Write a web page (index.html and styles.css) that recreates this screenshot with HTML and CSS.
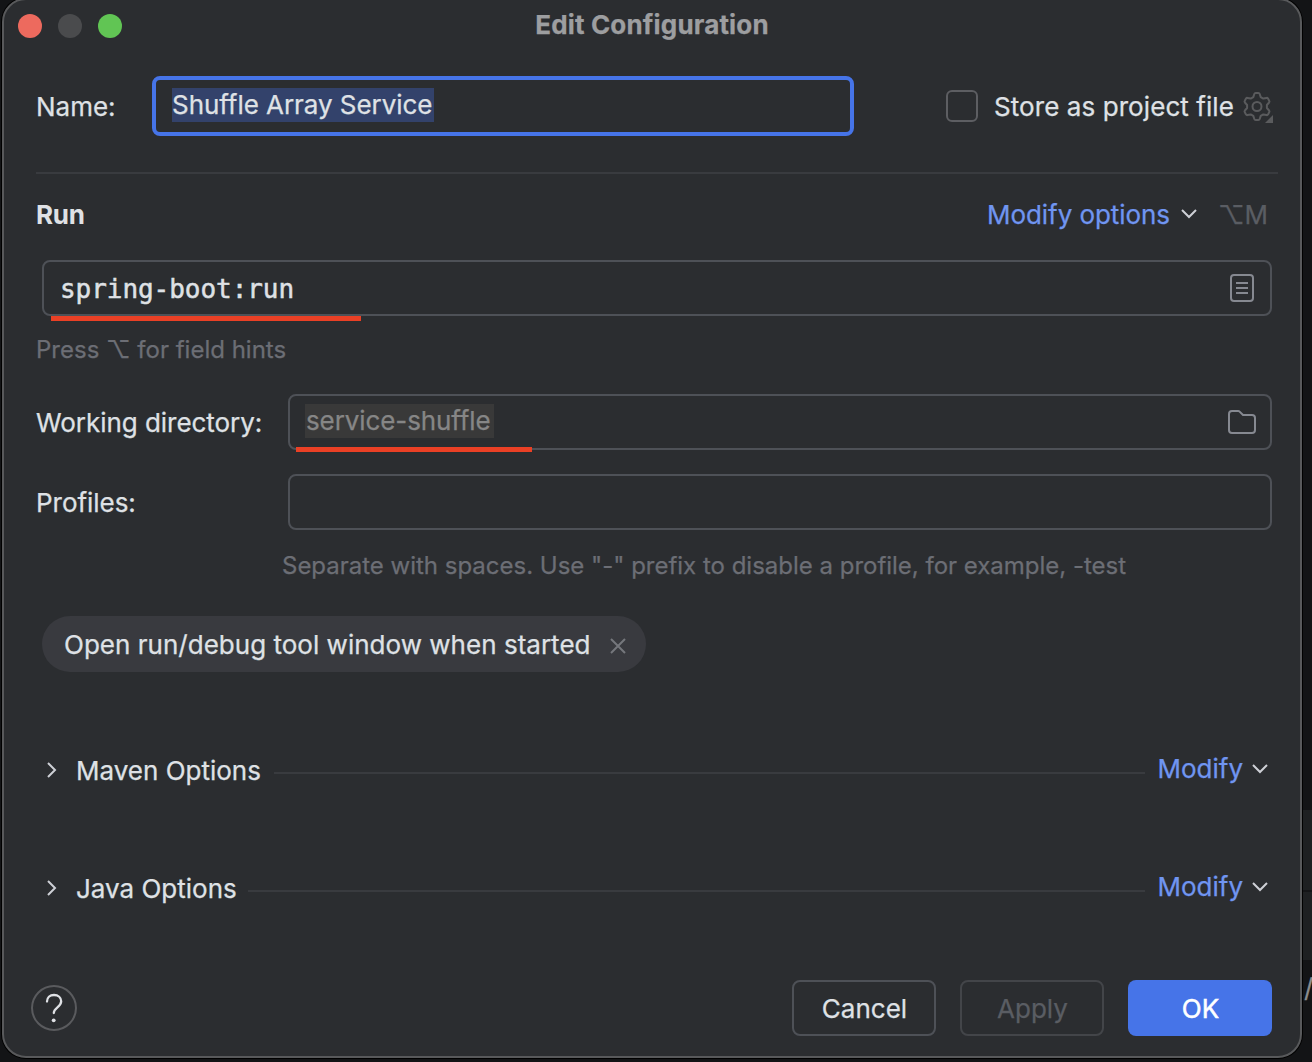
FILE: index.html
```html
<!DOCTYPE html>
<html lang="en">
<head>
<meta charset="utf-8">
<title>Edit Configuration</title>
<link rel="stylesheet" href="styles.css">
</head>
<body>
<div class="backdrop-panel"></div>
<span class="backdrop-text">/</span>
<main class="dialog">
  <header class="titlebar">
    <i class="light close"></i><i class="light minimize"></i><i class="light maximize"></i>
    <h1 class="title">Edit Configuration</h1>
  </header>

  <section class="name-row">
    <label class="name-label">Name:</label>
    <div class="input focused"><span class="selection">Shuffle Array Service</span></div>
    <div class="store">
      <i class="checkbox"></i>
      <span class="store-label">Store as project file</span>
      <svg class="gear" width="32" height="32" viewBox="0 0 32 32" fill="none" stroke="#5a5b5d" stroke-width="2" stroke-linejoin="round">
        <path d="M13.6 2h2.800c.6 0 1.100.4 1.300 1l1 3.100 2.600 1.500 3.200-.7c.6-.1 1.200.1 1.500.7l1.300 2.300c.3.500.2 1.100-.2 1.600L24.900 14v3l2.200 2.500c.4.500.5 1.100.2 1.600L26 23.400c-.3.600-.9.800-1.500.7l-3.200-.7-2.600 1.500-1 3.100c-.2.600-.7 1-1.300 1h-2.800c-.6 0-1.100-.4-1.300-1l-1-3.100-2.600-1.500-3.200.7c-.6.1-1.200-.1-1.500-.7l-1.300-2.300c-.3-.5-.2-1.100.2-1.600L5.100 17v-3l-2.200-2.500c-.4-.5-.5-1.100-.2-1.600L4 7.600c.3-.6.9-.8 1.500-.7l3.200.7 2.600-1.500 1-3.100c.2-.6.7-1 1.300-1z"/>
        <circle cx="15" cy="15.500" r="4.500"/>
        <path d="M31 24v8h-8z" fill="#5a5b5d" stroke="none"/>
      </svg>
    </div>
  </section>

  <hr class="separator">

  <section class="run-row">
    <h2 class="run-title">Run</h2>
    <a class="link">Modify options</a>
    <svg class="chevron-down" width="16" height="10" viewBox="0 0 16 10"><path d="M1 1l7 7 7-7"/></svg>
    <span class="shortcut">⌥M</span>
  </section>

  <div class="input command">
    <span class="mono">spring-boot:run</span>
    <svg width="24" height="28" viewBox="0 0 24 28" class="field-icon"><rect x="1" y="1" width="22" height="26" rx="3"/><path d="M6 9h12M6 14h12M6 19h12"/></svg>
    <i class="mark mark-command"></i>
  </div>
  <p class="hint press-hint">Press ⌥ for field hints</p>

  <div class="form-row">
    <label class="form-label">Working directory:</label>
    <div class="input grow">
      <span class="directory">service-shuffle</span>
      <svg width="28" height="24" viewBox="0 0 28 24" class="field-icon folder"><path d="M1 4a3 3 0 0 1 3-3h6.200a2 2 0 0 1 1.400.6L15 5h9a3 3 0 0 1 3 3v12a3 3 0 0 1-3 3H4a3 3 0 0 1-3-3z"/></svg>
      <i class="mark mark-directory"></i>
    </div>
  </div>
  <div class="form-row profiles">
    <label class="form-label">Profiles:</label>
    <div class="input grow"></div>
  </div>
  <p class="hint profile-hint">Separate with spaces. Use "-" prefix to disable a profile, for example, -test</p>

  <div class="chip">
    <span class="chip-text">Open run/debug tool window when started</span>
    <svg width="16" height="16" viewBox="0 0 16 16" class="chip-close"><path d="M1 1l14 14M15 1 1 15"/></svg>
  </div>

  <section class="group maven">
    <svg class="chevron-right" width="10" height="16" viewBox="0 0 10 16"><path d="M1 1l7 7-7 7"/></svg>
    <span class="group-title">Maven Options</span>
    <i class="rule"></i>
    <a class="link group-link">Modify</a>
    <svg class="chevron-down" width="16" height="10" viewBox="0 0 16 10"><path d="M1 1l7 7 7-7"/></svg>
  </section>
  <section class="group java">
    <svg class="chevron-right" width="10" height="16" viewBox="0 0 10 16"><path d="M1 1l7 7-7 7"/></svg>
    <span class="group-title">Java Options</span>
    <i class="rule"></i>
    <a class="link group-link">Modify</a>
    <svg class="chevron-down" width="16" height="10" viewBox="0 0 16 10"><path d="M1 1l7 7 7-7"/></svg>
  </section>

  <footer class="footer">
    <svg class="help" width="46" height="46" viewBox="0 0 46 46" fill="none">
      <circle cx="23" cy="23" r="22" stroke="#5a5b5e" stroke-width="2"/>
      <path d="M16 16.500C16 12.700 18.800 10 23 10s7.200 2.600 7.200 6.300c0 5.700-7.400 6.200-7.400 11.700" stroke="#dfe1e5" stroke-width="2.300" stroke-linecap="round"/>
      <circle cx="22.700" cy="35.300" r="1.900" fill="#dfe1e5"/>
    </svg>
    <button class="button">Cancel</button>
    <button class="button disabled">Apply</button>
    <button class="button primary">OK</button>
  </footer>
</main>
</body>
</html>
```
FILE: styles.css
```css
* { box-sizing: border-box; }
body {
  margin: 0;
  width: 1312px;
  height: 1062px;
  overflow: hidden;
  position: relative;
  background: #131416;
  font-family: Inter, "Liberation Sans", sans-serif;
  font-size: 26px;
  line-height: 32px;
  color: #dfe1e5;
  white-space: nowrap;
  -webkit-text-stroke: .25px;
}
h1, h2, p { margin: 0; font-size: 26px; }
svg, i { display: block; flex: none; }

.backdrop-panel {
  position: absolute;
  left: 1302px;
  top: 810px;
  width: 10px;
  height: 150px;
  background: linear-gradient(#1e2022 80px, #141517 80px, #141517 82px, #1e2022 82px);
}
.backdrop-text { position: absolute; left: 1304px; top: 972px; color: #8b8c8e; }

.dialog {
  position: relative;
  width: 1300px;
  height: 1060px;
  margin: -2px 0 0 2px;
  border: 2px solid #58595b;
  border-radius: 24px;
  background: #2b2d30;
  box-shadow: 0 0 0 1px #000;
}

.titlebar { display: flex; align-items: center; gap: 16px; height: 52px; padding-left: 14px; position: relative; }
.light { width: 24px; height: 24px; border-radius: 50%; }
.close { background: #ed6a5e; }
.minimize { background: #4a4b4d; }
.maximize { background: #61c554; }
.title { position: absolute; left: 0; right: 0; top: 9px; text-align: center; font-weight: 700; color: #9d9ea0; letter-spacing: .17px; }

.name-row { display: flex; margin-top: 24px; height: 60px; padding: 0 26px 0 32px; }
.name-label { width: 116px; padding-top: 15px; }
.input { position: relative; display: flex; align-items: center; height: 56px; border: 2px solid #4e5157; border-radius: 8px; }
.focused { width: 702px; height: 60px; align-items: flex-start; padding: 8px 16px; border: 4px solid #4674e8; }
.selection { width: 262px; height: 34px; padding-top: 1px; background: #33426b; letter-spacing: -.05px; }
.store { display: flex; align-items: flex-start; margin-left: auto; }
.checkbox { width: 32px; height: 32px; margin: 14px 16px 0 0; border: 2px solid #5d5e62; border-radius: 6px; }
.store-label { padding-top: 15px; letter-spacing: .08px; }
.gear { margin: 15px 0 0 8px; }

.separator { margin: 36px 22px 0 32px; height: 2px; border: 0; background: #393b3f; }

.run-row { display: flex; align-items: center; height: 86px; padding: 0 32px 4px 32px; }
.run-title { margin-right: auto; font-weight: 700; letter-spacing: -.3px; -webkit-text-stroke: 0; }
.link { color: #7095f1; }
.chevron-down, .chevron-right { fill: none; stroke: #ced0d6; stroke-width: 2; }
.run-row .link { letter-spacing: -.07px; }
.run-row .chevron-down { margin: -2px 21px 0 11px; }
.shortcut { color: #5a5d63; }

.command { margin: 0 28px 0 38px; padding: 0 16px; }
.mono { font-family: "DejaVu Sans Mono", monospace; margin-right: auto; padding-top: 2px; letter-spacing: -.05px; -webkit-text-stroke: .5px; }
.field-icon { margin-left: auto; fill: none; stroke: #868991; stroke-width: 2; }
.mark { position: absolute; height: 5px; background: #ea4025; }
.mark-command { left: 7px; top: 54px; width: 310px; }
.mark-directory { left: 6px; top: 51px; width: 236px; }
.hint { color: #6c6e75; font-size: 24px; }
.press-hint { margin: 18px 0 0 32px; height: 60px; }

.form-row { display: flex; padding: 0 28px 0 32px; }
.form-label { width: 252px; padding-top: 13px; letter-spacing: -.04px; }
.grow { flex: 1; padding: 0 14px 0 15px; }
.directory { width: 189px; height: 34px; margin-bottom: 2px; padding: 1px 0 0 1px; background: #393939; color: #868686; letter-spacing: -.1px; }
.profiles { margin-top: 24px; }
.profile-hint { margin: 20px 0 0 278px; letter-spacing: -.01px; }

.chip { display: flex; align-items: center; width: 604px; height: 56px; margin: 34px 0 0 38px; padding: 0 20px 0 22px; border-radius: 28px; background: #393a3f; }
.chip-text { margin-right: auto; padding-top: 2px; letter-spacing: .02px; }
.chip-close { fill: none; stroke: #75777c; stroke-width: 2; margin-top: 4px; }

.group { display: flex; align-items: center; height: 32px; padding: 0 32px 0 43px; }
.maven { margin-top: 83px; }
.java { margin-top: 86px; }
.group-title { margin: 0 13px 0 19px; }
.java .group-title { margin-right: 11px; }
.rule { flex: 1; height: 2px; margin-top: 3px; background: #393b3f; }
.group-link { margin: -4px 9px 0 12px; }
.group .chevron-down { margin-top: -5px; }
.group .chevron-right { margin-top: -2px; }

.footer { display: flex; gap: 24px; margin-top: 75px; padding: 0 28px 0 27px; }
.help { margin: 5px auto 0 0; }
.button { width: 144px; height: 56px; padding: 2px 0 0 1px; border: 2px solid #4e5157; border-radius: 8px; background: transparent; color: #dfe1e5; font: inherit; }
.disabled { border-color: #434549; color: #5a5d63; }
.primary { border: 0; background: #4674e8; color: #fff; -webkit-text-stroke: .5px; }
```
